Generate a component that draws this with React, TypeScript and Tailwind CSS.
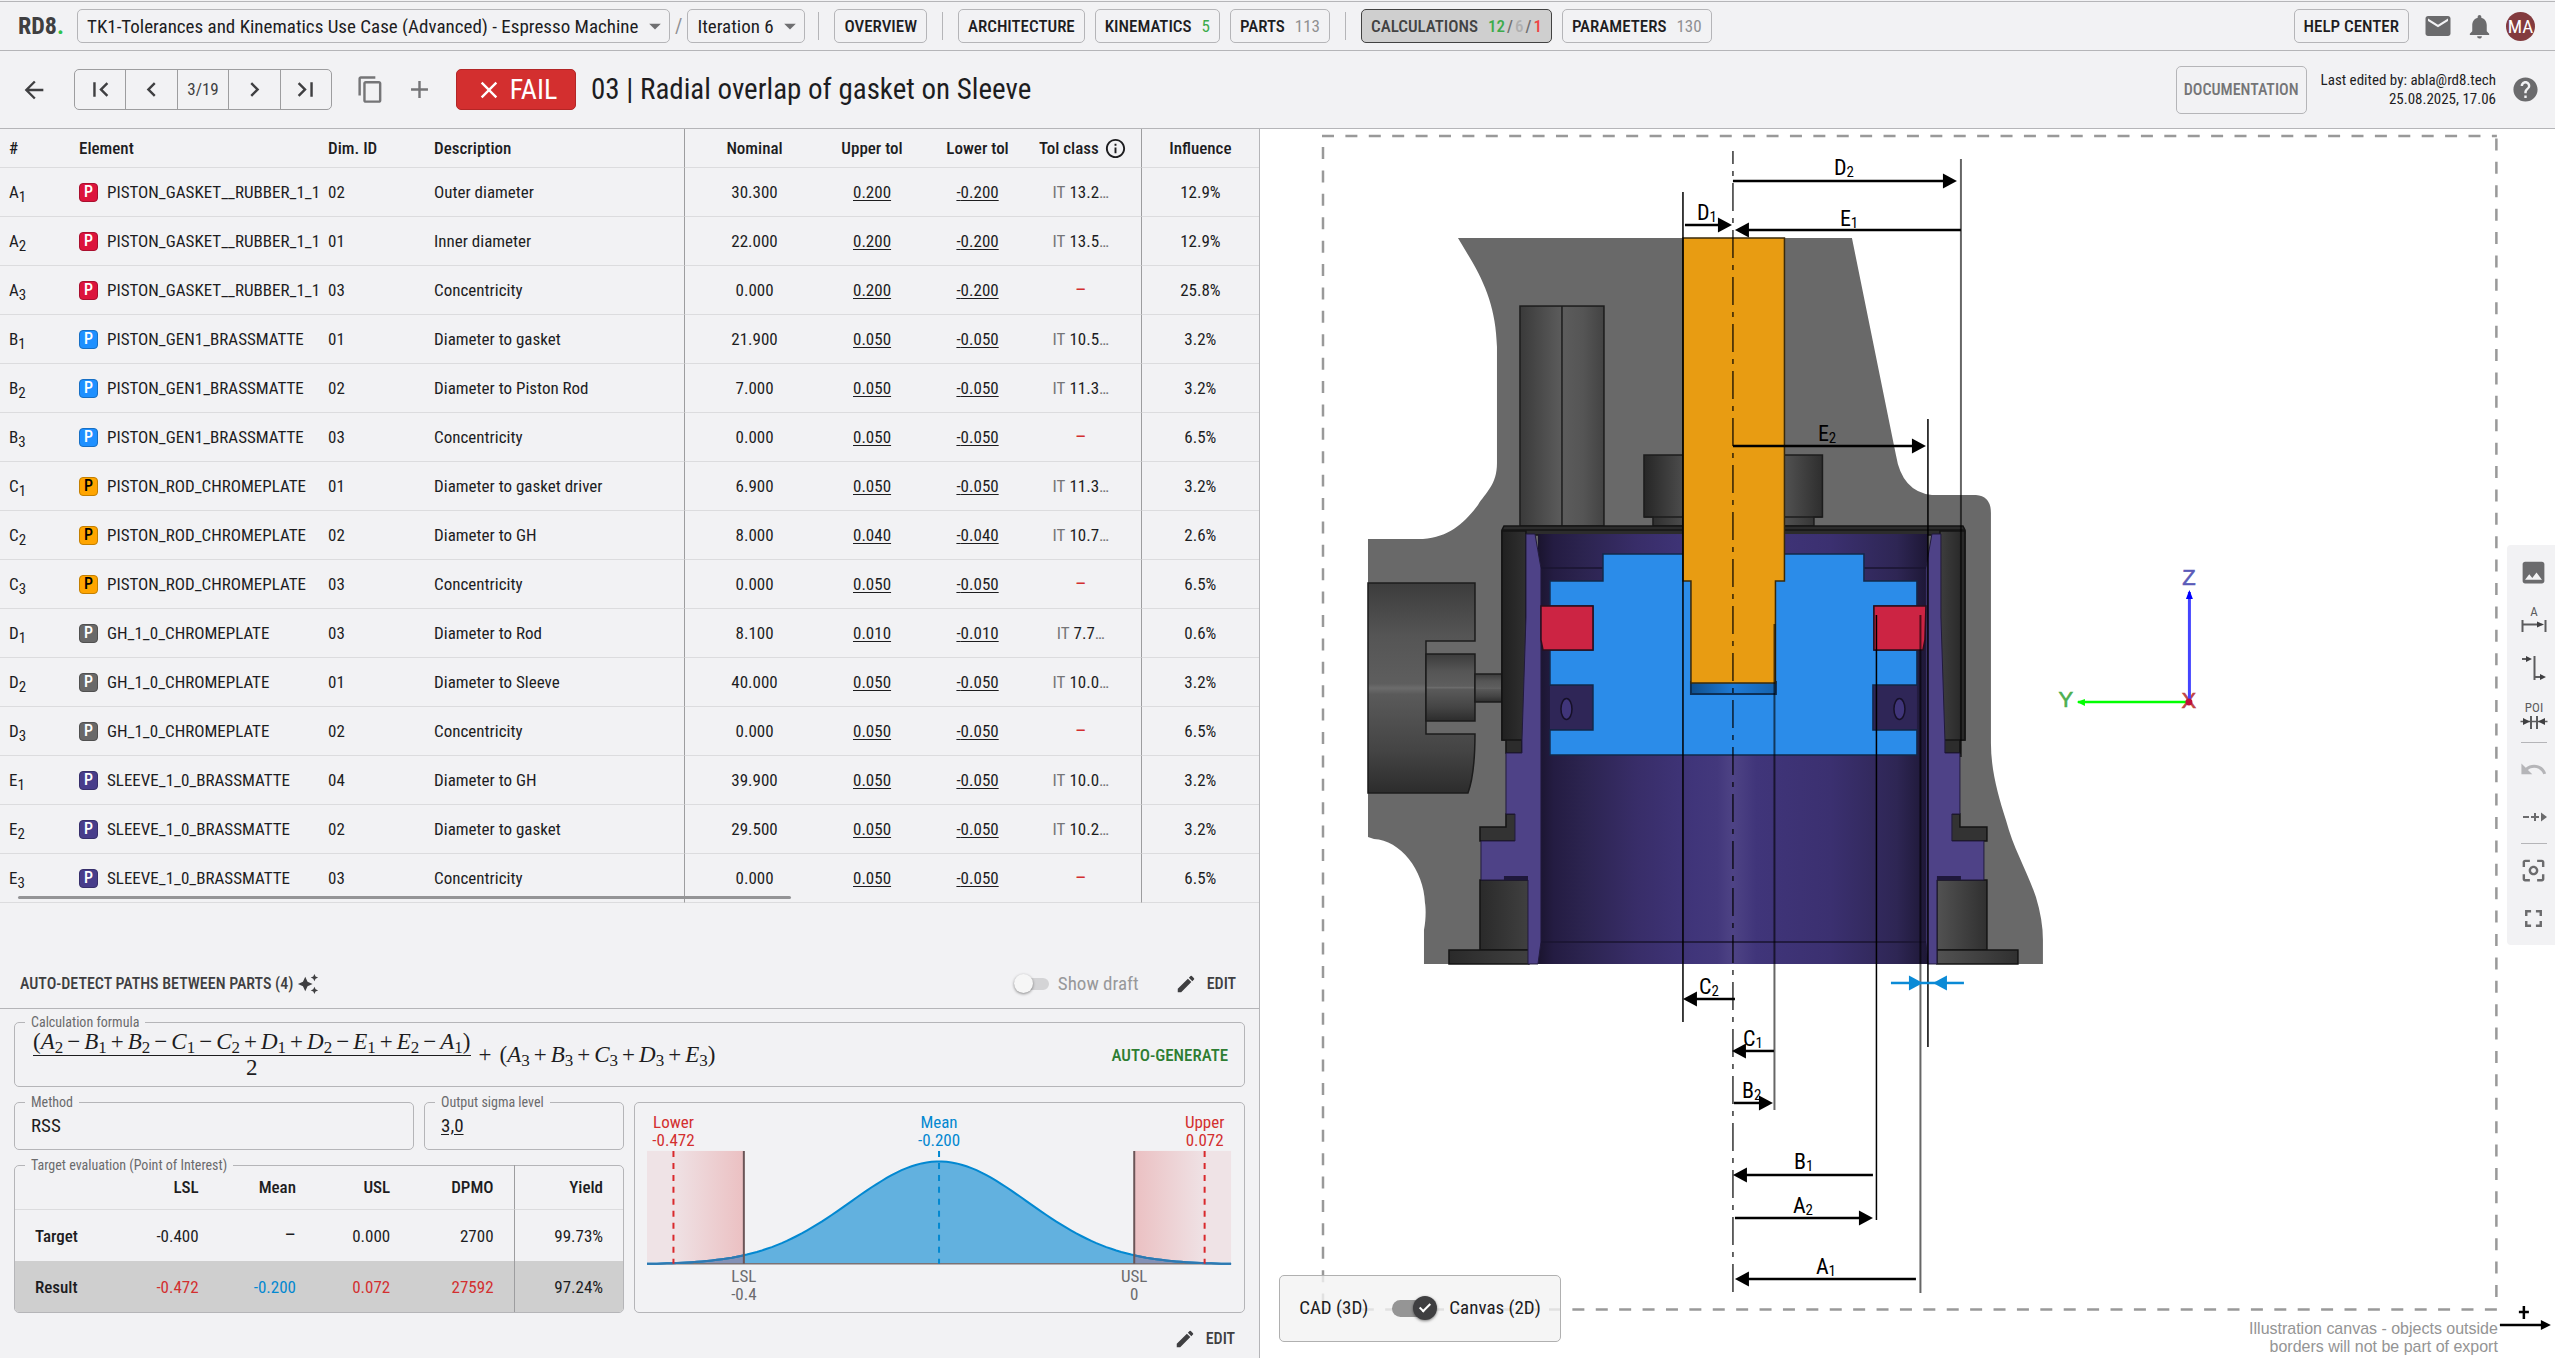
import type { ReactNode } from "react";
import {
  MdAdd,
  MdArrowBack,
  MdArrowDropDown,
  MdAutoAwesome,
  MdCenterFocusWeak,
  MdChevronLeft,
  MdChevronRight,
  MdClose,
  MdContentCopy,
  MdEdit,
  MdEmail,
  MdFirstPage,
  MdFullscreen,
  MdHelp,
  MdImage,
  MdInfoOutline,
  MdLastPage,
  MdNotifications,
  MdUndo,
} from "react-icons/md";

/* ---------- shared data ---------- */

type PartKey = "gasket" | "piston" | "rod" | "gh" | "sleeve";

const PARTS: Record<PartKey, { name: string; badge: string }> = {
  gasket: { name: "PISTON_GASKET__RUBBER_1_1", badge: "bg-[#dc143c] border-[#a90f2e] text-white" },
  piston: { name: "PISTON_GEN1_BRASSMATTE", badge: "bg-[#1e90ff] border-[#176fc4] text-white" },
  rod: { name: "PISTON_ROD_CHROMEPLATE", badge: "bg-[#ffa500] border-[#c47f00] text-black" },
  gh: { name: "GH_1_0_CHROMEPLATE", badge: "bg-[#696969] border-[#505050] text-white" },
  sleeve: { name: "SLEEVE_1_0_BRASSMATTE", badge: "bg-[#483d8b] border-[#372f6b] text-white" },
};

type Row = [string, string, PartKey, string, string, string, string, string | null, string];

const ROWS: Row[] = [
  ["A", "1", "gasket", "02", "Outer diameter", "30.300", "0.200", "13.2", "12.9%"],
  ["A", "2", "gasket", "01", "Inner diameter", "22.000", "0.200", "13.5", "12.9%"],
  ["A", "3", "gasket", "03", "Concentricity", "0.000", "0.200", null, "25.8%"],
  ["B", "1", "piston", "01", "Diameter to gasket", "21.900", "0.050", "10.5", "3.2%"],
  ["B", "2", "piston", "02", "Diameter to Piston Rod", "7.000", "0.050", "11.3", "3.2%"],
  ["B", "3", "piston", "03", "Concentricity", "0.000", "0.050", null, "6.5%"],
  ["C", "1", "rod", "01", "Diameter to gasket driver", "6.900", "0.050", "11.3", "3.2%"],
  ["C", "2", "rod", "02", "Diameter to GH", "8.000", "0.040", "10.7", "2.6%"],
  ["C", "3", "rod", "03", "Concentricity", "0.000", "0.050", null, "6.5%"],
  ["D", "1", "gh", "03", "Diameter to Rod", "8.100", "0.010", "7.7", "0.6%"],
  ["D", "2", "gh", "01", "Diameter to Sleeve", "40.000", "0.050", "10.0", "3.2%"],
  ["D", "3", "gh", "02", "Concentricity", "0.000", "0.050", null, "6.5%"],
  ["E", "1", "sleeve", "04", "Diameter to GH", "39.900", "0.050", "10.0", "3.2%"],
  ["E", "2", "sleeve", "02", "Diameter to gasket", "29.500", "0.050", "10.2", "3.2%"],
  ["E", "3", "sleeve", "03", "Concentricity", "0.000", "0.050", null, "6.5%"],
];

/* ---------- top bars ---------- */

function Divider() {
  return <span className="mx-[5px] h-7 w-px bg-[#b5b5b8]" />;
}

function NavButton({ children, active = false }: { children: ReactNode; active?: boolean }) {
  return (
    <button
      type="button"
      className={
        active
          ? "flex h-[34px] items-center gap-2.5 rounded-[5px] border border-[#424242] bg-[#cfcfcf] px-[9px] font-medium text-[#424242]"
          : "flex h-[34px] items-center gap-2.5 rounded-[5px] border border-[#b5b5b8] px-[9px] font-medium text-[#1d1d1f]"
      }
    >
      {children}
    </button>
  );
}

function Picker({ label, value }: { label: string; value: string }) {
  return (
    <label className="relative flex h-[34px] items-center rounded-[5px] border border-[#b5b5b8]">
      <select
        aria-label={label}
        className="h-full appearance-none bg-transparent pr-[30px] pl-[9px] text-[19px] outline-none"
        defaultValue={value}
      >
        <option>{value}</option>
      </select>
      <MdArrowDropDown size={28} className="pointer-events-none absolute top-0.5 right-0 text-[#6f6f71]" />
    </label>
  );
}

function TopBar() {
  return (
    <header className="mt-px flex h-[50px] items-center border-y border-[#b5b5b8] pr-5 text-[17px] leading-none">
      <a href="#home" className="w-[77px] pl-[18px] text-[24px] font-bold text-[#3f3f41]">
        RD8<span className="text-[#2fc24c]">.</span>
      </a>
      <Picker label="Project" value="TK1-Tolerances and Kinematics Use Case (Advanced) - Espresso Machine" />
      <span className="px-[5px] text-[20px] text-[#8f8f91]">/</span>
      <Picker label="Iteration" value="Iteration 6" />
      <nav className="ml-2 flex items-center gap-2.5">
        <Divider />
        <NavButton>OVERVIEW</NavButton>
        <Divider />
        <NavButton>ARCHITECTURE</NavButton>
        <NavButton>
          KINEMATICS <span className="font-normal text-[#3cab4b]">5</span>
        </NavButton>
        <NavButton>
          PARTS <span className="font-normal text-[#8f8f91]">113</span>
        </NavButton>
        <Divider />
        <NavButton active>
          CALCULATIONS
          <span className="flex gap-[2px] text-[#6f6f71]">
            <span className="text-[#3cab4b]">12</span>/<span className="text-[#b0b0b0]">6</span>/
            <span className="text-[#ef4444]">1</span>
          </span>
        </NavButton>
        <NavButton>
          PARAMETERS <span className="font-normal text-[#8f8f91]">130</span>
        </NavButton>
      </nav>
      <div className="ml-auto flex items-center text-[#6b6b6d]">
        <NavButton>HELP CENTER</NavButton>
        <button type="button" aria-label="Messages" className="ml-[14px]">
          <MdEmail size={30} />
        </button>
        <button type="button" aria-label="Notifications" className="ml-3">
          <MdNotifications size={29} />
        </button>
        <button
          type="button"
          aria-label="Account"
          className="ml-3 flex size-[29px] items-center justify-center rounded-full bg-[#833b3e] text-[19px] text-white"
        >
          MA
        </button>
      </div>
    </header>
  );
}

function PagerButton({ label, children }: { label: string; children: ReactNode }) {
  return (
    <button type="button" aria-label={label} className="flex flex-1 items-center justify-center">
      {children}
    </button>
  );
}

function TitleBar() {
  return (
    <div className="flex h-[78px] items-center border-b border-[#b5b5b8] pr-[15px] text-[#3f3f41]">
      <button type="button" aria-label="Back" className="ml-5">
        <MdArrowBack size={28} />
      </button>
      <div className="ml-[26px] flex h-[41px] w-[258px] divide-x divide-[#9d9d9f] rounded-[5px] border border-[#9d9d9f] text-[17px]">
        <PagerButton label="First">
          <MdFirstPage size={29} />
        </PagerButton>
        <PagerButton label="Previous">
          <MdChevronLeft size={29} />
        </PagerButton>
        <span className="flex flex-1 items-center justify-center">3/19</span>
        <PagerButton label="Next">
          <MdChevronRight size={29} />
        </PagerButton>
        <PagerButton label="Last">
          <MdLastPage size={29} />
        </PagerButton>
      </div>
      <button type="button" aria-label="Duplicate" className="ml-6 text-[#757577]">
        <MdContentCopy size={29} />
      </button>
      <button type="button" aria-label="Add" className="ml-5 text-[#757577]">
        <MdAdd size={29} />
      </button>
      <span className="ml-[22px] flex h-[41px] w-[120px] items-center justify-center gap-[7px] rounded-[5px] border border-[#b32626] bg-[#d32f2f] text-[28px] leading-none text-white">
        <MdClose size={28} />
        FAIL
      </span>
      <h1 className="ml-[15px] text-[29px] leading-none text-[#1d1d1f]">03 | Radial overlap of gasket on Sleeve</h1>
      <button
        type="button"
        className="ml-auto h-12 rounded-[5px] border border-[#b5b5b8] px-[7px] text-[16px] font-medium text-[#757577]"
      >
        DOCUMENTATION
      </button>
      <p className="ml-[14px] text-right text-[15px] leading-[19px] text-[#1d1d1f]">
        Last edited by: abla@rd8.tech
        <br />
        25.08.2025, 17.06
      </p>
      <button type="button" aria-label="Help" className="ml-[15px] text-[#6b6b6d]">
        <MdHelp size={29} />
      </button>
    </div>
  );
}

/* ---------- tolerance table ---------- */

const TH = "h-[39px] border-b border-[#dcdcde] p-0 font-medium";
const TD = "h-[49px] border-b border-[#dcdcde] p-0";
const RULE = " border-r border-r-[#9d9d9f]";

function ToleranceTable() {
  return (
    <div className="relative">
      <table className="w-full table-fixed border-separate border-spacing-0 text-[17px] leading-5">
        <colgroup>
          <col className="w-[5.56%]" />
          <col className="w-[19.78%]" />
          <col className="w-[8.42%]" />
          <col className="w-[20.65%]" />
          <col className="w-[10.72%]" />
          <col className="w-[8.26%]" />
          <col className="w-[8.5%]" />
          <col className="w-[8.78%]" />
          <col />
        </colgroup>
        <thead>
          <tr>
            <th className={TH + " pl-[9px] text-left"}>#</th>
            <th className={TH + " pl-[9px] text-left"}>Element</th>
            <th className={TH + " pl-[9px] text-left"}>Dim. ID</th>
            <th className={TH + " pl-[9px] text-left" + RULE}>Description</th>
            <th className={TH + " pl-1"}>Nominal</th>
            <th className={TH}>Upper tol</th>
            <th className={TH}>Lower tol</th>
            <th className={TH + " pr-1.5" + RULE}>
              <span className="flex items-center justify-center gap-[5px] whitespace-nowrap">
                Tol class <MdInfoOutline size={23} />
              </span>
            </th>
            <th className={TH}>Influence</th>
          </tr>
        </thead>
        <tbody>
          {ROWS.map(([letter, sub, part, dim, text, nominal, tol, it, influence]) => (
            <tr key={letter + sub}>
              <td className={TD + " pl-[9px]"}>
                {letter}
                <sub className="text-[15px]">{sub}</sub>
              </td>
              <td className={TD + " pl-[9px]"}>
                <span className="flex items-center gap-[9px]">
                  <span
                    className={
                      "flex size-[19px] shrink-0 items-center justify-center rounded-[4px] border text-[16px] leading-none font-medium " +
                      PARTS[part].badge
                    }
                  >
                    P
                  </span>
                  <span className="whitespace-nowrap">{PARTS[part].name}</span>
                </span>
              </td>
              <td className={TD + " pl-[9px]"}>{dim}</td>
              <td className={TD + " pl-[9px]" + RULE}>{text}</td>
              <td className={TD + " pl-1 text-center"}>{nominal}</td>
              <td className={TD + " text-center"}>
                <button type="button" className="underline underline-offset-2">
                  {tol}
                </button>
              </td>
              <td className={TD + " text-center"}>
                <button type="button" className="underline underline-offset-2">
                  -{tol}
                </button>
              </td>
              <td className={TD + " pr-2.5 text-center" + RULE}>
                {it ? (
                  <span className="inline-flex items-baseline">
                    <span className="mr-1 text-[#757577]">IT</span>
                    {it}
                    <span className="text-[#757577]">…</span>
                  </span>
                ) : (
                  <span className="text-[20px] text-[#d32f2f]">–</span>
                )}
              </td>
              <td className={TD + " text-center"}>{influence}</td>
            </tr>
          ))}
        </tbody>
      </table>
      <div className="absolute bottom-1 left-[18px] h-[3px] w-[61.4%] rounded-full bg-[#949496]" />
    </div>
  );
}

/* ---------- calculation section ---------- */

function Sym({ children, n }: { children: string; n: number }) {
  return (
    <span>
      <i>{children}</i>
      <sub className="text-[17px]">{n}</sub>
    </span>
  );
}

function Terms({ items }: { items: string[] }) {
  return (
    <span className="flex items-baseline gap-1 whitespace-nowrap">
      {items.map((t, i) => {
        const bare = t.replace(/[+−]/, "");
        return (
          <span key={t} className="flex items-baseline gap-1">
            {/^[+−]/.test(t) && <span>{t[0]}</span>}
            <span>
              {i === 0 && "("}
              <Sym n={Number(bare[1])}>{bare[0]}</Sym>
              {i === items.length - 1 && ")"}
            </span>
          </span>
        );
      })}
    </span>
  );
}

function EditButton() {
  return (
    <button type="button" className="flex items-center gap-[10px] text-[16px] font-medium text-[#3f3f41]">
      <MdEdit size={22} /> EDIT
    </button>
  );
}

const FIELDSET = "min-w-0 rounded-[5px] border border-[#b5b5b8] px-2.5";
const LEGEND = "px-1.5 text-[14px] leading-4 text-[#6b6b6d]";

function TargetTable() {
  const head = "h-[45px] border-b border-[#dcdcde] p-0 pr-5 text-right font-medium";
  const cell = "h-[51px] p-0 pr-5 text-right";
  const rule = " border-l border-l-[#9d9d9f]";
  return (
    <fieldset className="min-w-0 rounded-[5px] border border-[#b5b5b8]">
      <legend className={LEGEND + " ml-2.5"}>Target evaluation (Point of Interest)</legend>
      <table className="-mt-2 w-full table-fixed border-separate border-spacing-0 text-[17px] leading-5">
        <colgroup>
          <col className="w-[16.5%]" />
          <col className="w-[17%]" />
          <col className="w-[16%]" />
          <col className="w-[15.5%]" />
          <col className="w-[17%]" />
          <col />
        </colgroup>
        <thead>
          <tr>
            <td className="border-b border-[#dcdcde]" />
            <th className={head}>LSL</th>
            <th className={head}>Mean</th>
            <th className={head}>USL</th>
            <th className={head}>DPMO</th>
            <th className={head + rule}>Yield</th>
          </tr>
        </thead>
        <tbody>
          <tr>
            <th className="pl-5 text-left font-medium">Target</th>
            <td className={cell}>-0.400</td>
            <td className={cell}>
              <span className="text-[20px]">–</span>
            </td>
            <td className={cell}>0.000</td>
            <td className={cell}>2700</td>
            <td className={cell + rule}>99.73%</td>
          </tr>
          <tr className="bg-[#cfcfcf] text-[#d32f2f]">
            <th className="rounded-bl-[4px] pl-5 text-left font-medium text-[#1d1d1f]">Result</th>
            <td className={cell}>-0.472</td>
            <td className={cell + " text-[#0288d1]"}>-0.200</td>
            <td className={cell}>0.072</td>
            <td className={cell}>27592</td>
            <td className={cell + rule + " rounded-br-[4px] text-[#1d1d1f]"}>97.24%</td>
          </tr>
        </tbody>
      </table>
    </fieldset>
  );
}

/* Normal distribution around the mean, in the chart's own units. */
const CURVE = Array.from({ length: 118 }, (_, i) => {
  const x = 12 + i * 5;
  const y = 161.5 - 103 * Math.exp(-((x - 304.5) ** 2) / (2 * 88.6 ** 2));
  return `${x},${y.toFixed(1)}`;
}).join(" L");

function DistributionChart() {
  return (
    <svg viewBox="0 0 610 209" className="block w-full" role="img" aria-label="Output distribution">
      <defs>
        <linearGradient id="lowTail" x1="0" x2="1">
          <stop offset="0.25" stopColor="#efe3e6" />
          <stop offset="1" stopColor="#ebc0c2" />
        </linearGradient>
        <linearGradient id="highTail" x1="1" x2="0">
          <stop offset="0.25" stopColor="#efe3e6" />
          <stop offset="1" stopColor="#ebc0c2" />
        </linearGradient>
        <clipPath id="tails">
          <path d="M0 0H109V209H0ZM500 0H610V209H500Z" />
        </clipPath>
      </defs>
      <rect x="12" y="48" width="97" height="113" fill="url(#lowTail)" />
      <rect x="500" y="48" width="97" height="113" fill="url(#highTail)" />
      <path d={`M12,161 L${CURVE} L597,161Z`} fill="#62b1df" />
      <path d={`M12,161 L${CURVE} L597,161Z`} fill="#8391b6" clipPath="url(#tails)" />
      <path d="M12 161H597" stroke="#7b7375" strokeWidth="1.5" />
      <path d={`M${CURVE}`} fill="none" stroke="#0288d1" strokeWidth="2" />
      <path d={`M${CURVE}`} fill="none" stroke="#2f78b0" strokeWidth="2" clipPath="url(#tails)" />
      <path d="M109 48V161M500 48V161" stroke="#6b5557" strokeWidth="2" />
      <path d="M38.5 48V161M570.5 48V161" stroke="#d9292c" strokeWidth="2" strokeDasharray="6 6" />
      <path d="M304.5 48V161" stroke="#0288d1" strokeWidth="2" strokeDasharray="6 6" />
      <g className="text-[17px]" textAnchor="middle">
        <g fill="#d32f2f">
          <text x="38.5" y="25">Lower</text>
          <text x="38.5" y="43">-0.472</text>
          <text x="570.5" y="25">Upper</text>
          <text x="570.5" y="43">0.072</text>
        </g>
        <g fill="#0288d1">
          <text x="304.5" y="25">Mean</text>
          <text x="304.5" y="43">-0.200</text>
        </g>
        <g fill="#6b6b6d">
          <text x="109" y="179">LSL</text>
          <text x="109" y="197">-0.4</text>
          <text x="500" y="179">USL</text>
          <text x="500" y="197">0</text>
        </g>
      </g>
    </svg>
  );
}

function LeftPanel() {
  return (
    <section className="flex w-[49.32%] shrink-0 flex-col border-r border-[#b5b5b8]">
      <ToleranceTable />
      <div className="mt-auto flex h-[49px] items-center border-b border-[#b5b5b8] pr-[23px] pl-5">
        <button type="button" className="flex items-center gap-1 text-[16px] font-medium text-[#3f3f41]">
          AUTO-DETECT PATHS BETWEEN PARTS (4) <MdAutoAwesome size={22} />
        </button>
        <label className="mr-9 ml-auto flex items-center gap-2 text-[19px] text-[#98989a]">
          <input
            type="checkbox"
            className="relative mr-px h-3 w-[35px] appearance-none rounded-full bg-[#d4d4d6] before:absolute before:-top-1 before:left-0 before:size-[19px] before:rounded-full before:bg-[#f6f6f6] before:shadow-[0_1px_3px_rgba(0,0,0,0.45)]"
          />
          Show draft
        </label>
        <EditButton />
      </div>
      <div className="flex flex-col gap-[7px] px-[14px] pt-[5px]">
        <fieldset className={FIELDSET + " h-[73px]"}>
          <legend className={LEGEND}>Calculation formula</legend>
          <div className="flex items-center justify-between pr-1.5 pl-2 font-['Liberation_Serif',serif] text-[23px] leading-6">
            <div className="flex items-center gap-2">
              <span className="flex flex-col items-center">
                <span className="h-[26px] border-b border-[#1d1d1f]">
                  <Terms items={["A2", "−B1", "+B2", "−C1", "−C2", "+D1", "+D2", "−E1", "+E2", "−A1"]} />
                </span>
                <span>2</span>
              </span>
              <span>+</span>
              <Terms items={["A3", "+B3", "+C3", "+D3", "+E3"]} />
            </div>
            <button
              type="button"
              className="font-['Roboto_Condensed',Roboto,sans-serif] text-[17px] font-medium text-[#2e7d32]"
            >
              AUTO-GENERATE
            </button>
          </div>
        </fieldset>
        <div className="grid grid-cols-[610fr_611fr] gap-2.5">
          <div className="flex flex-col gap-[7px]">
            <div className="grid grid-cols-[2fr_1fr] gap-2.5">
              <fieldset className={FIELDSET + " h-14"}>
                <legend className={LEGEND}>Method</legend>
                <p className="pt-1 pl-1.5 text-[19px] leading-6">RSS</p>
              </fieldset>
              <fieldset className={FIELDSET + " h-14"}>
                <legend className={LEGEND}>Output sigma level</legend>
                <input
                  aria-label="Output sigma level"
                  defaultValue="3,0"
                  className="block w-full bg-transparent pt-1 pl-1.5 text-[19px] leading-6 underline underline-offset-2 outline-none"
                />
              </fieldset>
            </div>
            <TargetTable />
          </div>
          <div className="mt-2 rounded-[5px] border border-[#b5b5b8]">
            <DistributionChart />
          </div>
        </div>
        <div className="flex h-[38px] items-center justify-end pr-2.5">
          <EditButton />
        </div>
      </div>
    </section>
  );
}

/* ---------- section drawing ---------- */

function Arrow({ from, to, y, color = "#000" }: { from: number; to: number; y: number; color?: string }) {
  const d = to > from ? 1 : -1;
  return (
    <g fill={color} stroke={color}>
      <path d={`M${from} ${y}H${to - d * 12}`} strokeWidth="2.5" />
      <path d={`M${to} ${y}L${to - d * 14} ${y - 7.5}V${y + 7.5}Z`} stroke="none" />
    </g>
  );
}

function Mark({ x, y, t, n }: { x: number; y: number; t: string; n: number }) {
  return (
    <text x={x} y={y} className="text-[22px]">
      {t}
      <tspan dy="2" className="text-[15px]">
        {n}
      </tspan>
    </text>
  );
}

function SectionDrawing() {
  return (
    <svg viewBox="1260 129 1295 1229" className="block h-full w-full" role="img" aria-label="Section view">
      <defs>
        <linearGradient id="bore" x1="0" x2="1">
          <stop offset="0" stopColor="#1a142e" />
          <stop offset="0.04" stopColor="#241c42" />
          <stop offset="0.12" stopColor="#2c2450" />
          <stop offset="0.25" stopColor="#382d68" />
          <stop offset="0.4" stopColor="#40357a" />
          <stop offset="0.46" stopColor="#43387c" />
          <stop offset="0.5" stopColor="#4e4385" />
          <stop offset="0.56" stopColor="#40357a" />
          <stop offset="0.75" stopColor="#3b3070" />
          <stop offset="0.92" stopColor="#2e2654" />
          <stop offset="1" stopColor="#1d1735" />
        </linearGradient>
        <linearGradient id="slot" x1="0" x2="1">
          <stop offset="0" stopColor="#3a3a3a" />
          <stop offset="0.35" stopColor="#525252" />
          <stop offset="0.5" stopColor="#5c5c5c" />
          <stop offset="0.75" stopColor="#555" />
          <stop offset="1" stopColor="#434343" />
        </linearGradient>
        <linearGradient id="boltL" x1="0" x2="1">
          <stop offset="0" stopColor="#262626" />
          <stop offset="1" stopColor="#4c4c4c" />
        </linearGradient>
        <linearGradient id="boltR" x1="1" x2="0">
          <stop offset="0" stopColor="#2e2e2e" />
          <stop offset="1" stopColor="#525252" />
        </linearGradient>
        <linearGradient id="wallL" x1="0" x2="1">
          <stop offset="0" stopColor="#202020" />
          <stop offset="1" stopColor="#303030" />
        </linearGradient>
        <linearGradient id="wallR" x1="0" x2="1">
          <stop offset="0" stopColor="#3e3e3e" />
          <stop offset="1" stopColor="#262626" />
        </linearGradient>
        <linearGradient id="pocketL" x1="0" x2="1">
          <stop offset="0" stopColor="#2a2a2a" />
          <stop offset="1" stopColor="#404040" />
        </linearGradient>
        <linearGradient id="pocketR" x1="0" x2="1">
          <stop offset="0" stopColor="#525252" />
          <stop offset="1" stopColor="#303030" />
        </linearGradient>
        <linearGradient id="shaft" x1="0" x2="0" y1="0" y2="1">
          <stop offset="0" stopColor="#3c3c3c" />
          <stop offset="0.25" stopColor="#555" />
          <stop offset="0.48" stopColor="#5e5e5e" />
          <stop offset="0.5" stopColor="#6c6c6c" />
          <stop offset="0.53" stopColor="#5a5a5a" />
          <stop offset="0.8" stopColor="#444" />
          <stop offset="1" stopColor="#2c2c2c" />
        </linearGradient>
        <linearGradient id="hole" x1="0" x2="1">
          <stop offset="0" stopColor="#0f4f8d" />
          <stop offset="0.5" stopColor="#1d7ad6" />
          <stop offset="1" stopColor="#1562ad" />
        </linearGradient>
      </defs>

      {/* gear housing */}
      <path
        fill="#696969"
        d="M1458 238H1852L1896 455Q1902 492 1932 495H1976Q1991 496 1991 513V743C1991 770 1998 795 2006 820C2014 850 2026 868 2036 897Q2043 920 2043 940V964H1424V930C1426 920 1426 908 1425 903C1424 870 1400 840 1374 839L1368 837V539H1423C1450 537 1465 522 1478 505C1486 492 1497 485 1497 463V347C1496 310 1486 285 1470 258Z"
      />
      <g stroke="#1c1c1c" strokeWidth="1.5">
        <rect x="1520" y="306" width="84" height="220" fill="url(#slot)" />
        <path d="M1562 306V526" />
        <path d="M1644 455H1683V526H1653V517H1644Z" fill="url(#boltL)" />
        <path d="M1784 455H1822.5V517H1814V526H1784Z" fill="url(#boltR)" />
        <path d="M1644 517H1683M1784 517H1822.5" />
        <path d="M1368 583H1475V641H1426V734H1475C1475 765 1472 782 1468 793H1368Z" fill="url(#shaft)" />
        <rect x="1426" y="654" width="49" height="67" fill="url(#shaft)" />
        <rect x="1475" y="674" width="27" height="28" fill="url(#shaft)" />
      </g>

      {/* cavities around the sleeve */}
      <g stroke="#141414" strokeWidth="1.5">
        <path d="M1504 526H1963L1965 530V740H1960V753H1944V740H1940V535H1526V740H1522V753H1506V740H1502V530Z" fill="#2c2c2c" />
        <path d="M1502 531H1526V740H1502Z" fill="url(#wallL)" />
        <path d="M1940 531H1965V740H1940Z" fill="url(#wallR)" />
        <path d="M1502 530H1965" />
        <path d="M1506 814H1516V841H1480V827H1506ZM1951 814H1960V827H1987V841H1951Z" fill="#333" />
        <path d="M1480 880H1529V950H1480Z" fill="url(#pocketL)" />
        <path d="M1937 880H1987V950H1937Z" fill="url(#pocketR)" />
        <path d="M1449 950H1529V964H1449Z" fill="url(#pocketL)" />
        <path d="M1937 950H2018V964H1937Z" fill="url(#pocketR)" />
      </g>

      {/* sleeve */}
      <rect x="1538" y="534" width="390" height="430" fill="url(#bore)" />
      <g fill="#4e4287" stroke="#211a3c" strokeWidth="1">
        <path d="M1526 534H1535L1541 568V942L1538 964H1528V880H1481V841H1515V814H1506V753H1522V740L1526 617Z" />
        <path d="M1941 534H1932L1926 568V942L1928 964H1937V880H1984V841H1952V814H1960V753H1945V740L1941 617Z" />
      </g>
      <path d="M1504 876H1528V880H1504ZM1937 876H1961V880H1937Z" fill="#1f183c" />
      <path d="M1541 568H1926M1541 942H1926" stroke="#1a1430" strokeWidth="1.5" />

      {/* piston, gasket and rod */}
      <path
        d="M1603 554H1864V581H1917V606H1874V650H1917V685H1873V730H1917V755H1550V730H1593V685H1550V650H1593V606H1550V581H1603Z"
        fill="#2b8ce9"
        stroke="#12284a"
        strokeWidth="1.5"
      />
      <path d="M1541 606H1593V650H1543L1541 640ZM1926 606H1874V650H1923L1925 640Z" fill="#cc2443" stroke="#2a0f1d" strokeWidth="1.5" />
      <path d="M1550 686H1592V729H1550ZM1917 686H1874V729H1917Z" fill="#2f2657" />
      <g fill="#40357a" stroke="#161028" strokeWidth="1.5">
        <ellipse cx="1566.5" cy="709" rx="5.5" ry="10.5" />
        <ellipse cx="1899.5" cy="709" rx="5.5" ry="10.5" />
      </g>
      <rect x="1691" y="682" width="85" height="12" fill="url(#hole)" stroke="#0d2f55" strokeWidth="2" />
      <path d="M1683 238H1784.5V581H1775.5V683H1691V581H1683Z" fill="#e89c12" stroke="#3a2a0a" strokeWidth="1.5" />

      {/* axis and extension lines */}
      <path d="M1733 1292V151" stroke="#000" strokeWidth="1.2" strokeDasharray="28 7 5 7" />
      <path d="M1683 192V1022M1928 419V1047M1876.5 615V1220" stroke="#000" strokeWidth="1.5" />
      <path d="M1961 159V757M1774.5 624V1110M1920.5 615V1293" stroke="#000" strokeOpacity="0.6" strokeWidth="2" />

      <Arrow from={1733} to={1957} y={181} />
      <Arrow from={1685} to={1732} y={225} />
      <Arrow from={1961} to={1735} y={230} />
      <Arrow from={1733} to={1926} y={446} />
      <Arrow from={1735} to={1683} y={999} />
      <Arrow from={1774} to={1732} y={1051} />
      <Arrow from={1734} to={1773} y={1103} />
      <Arrow from={1873} to={1733} y={1175} />
      <Arrow from={1735} to={1873} y={1218} />
      <Arrow from={1916} to={1735} y={1279} />
      <Arrow from={1891} to={1923} y={983} color="#0a8ad6" />
      <Arrow from={1964} to={1933} y={983} color="#0a8ad6" />
      <path d="M1920 983H1936" stroke="#0a8ad6" strokeWidth="2.5" />

      <Mark x={1834} y={175} t="D" n={2} />
      <Mark x={1697} y={220} t="D" n={1} />
      <Mark x={1840} y={226} t="E" n={1} />
      <Mark x={1818} y={441} t="E" n={2} />
      <Mark x={1699} y={994} t="C" n={2} />
      <Mark x={1743} y={1046} t="C" n={1} />
      <Mark x={1742} y={1098} t="B" n={2} />
      <Mark x={1794} y={1169} t="B" n={1} />
      <Mark x={1793} y={1213} t="A" n={2} />
      <Mark x={1816} y={1274} t="A" n={1} />

      {/* export frame */}
      <g stroke="#999" strokeWidth="2.5" fill="none">
        <path d="M1322 136H2497" strokeDasharray="12 11.4" />
        <path d="M1323 147V1310" strokeDasharray="12 11.4" />
        <path d="M2496.5 1297V136" strokeDasharray="12 11.4" />
        <path d="M2497 1309.5H1322" strokeDasharray="12 11.4" />
      </g>
      <g className="font-['Liberation_Sans',Arial,sans-serif] text-[16px]" fill="#949494" textAnchor="end">
        <text x="2498" y="1334">Illustration canvas - objects outside</text>
        <text x="2498" y="1352">borders will not be part of export</text>
      </g>
      <path d="M2500 1325H2542M2524 1306V1319M2519 1312H2529" stroke="#000" strokeWidth="2.5" />
      <path d="M2551 1325L2541 1320V1330Z" />

      {/* axis triad */}
      <g className="font-['Liberation_Sans',Arial,sans-serif] text-[22px]" strokeWidth="0.6" textAnchor="middle">
        <text x="2189" y="585" fill="#5a5ab8" stroke="#5a5ab8">Z</text>
        <text x="2066" y="707" fill="#4caf50" stroke="#4caf50">Y</text>
        <text x="2189" y="708" fill="#c04444" stroke="#c04444">X</text>
      </g>
      <path d="M2189 702H2078" stroke="#00ff00" strokeWidth="2.5" />
      <path d="M2077 702L2085 699V706Z" fill="#00ff00" />
      <path d="M2189.5 702V592" stroke="#4444ff" strokeWidth="3" />
      <path d="M2189.5 590L2186 599H2193Z" fill="#0000ff" />
      <circle cx="2189" cy="702" r="3.5" fill="#c0103a" />
    </svg>
  );
}

/* ---------- canvas tools ---------- */

function ToolButton({ label, children }: { label: string; children: ReactNode }) {
  return (
    <button type="button" aria-label={label} className="flex h-12 w-full items-center justify-center">
      {children}
    </button>
  );
}

function DimensionIcon() {
  return (
    <svg width="28" height="28" viewBox="0 0 28 28" fill="#5c5c5e" stroke="#5c5c5e">
      <path d="M2.5 14V26M25.5 14V26M3 18.5H19" strokeWidth="2" fill="none" />
      <path d="M24 18.5L17 15.5V21.5Z" fill="#3f3f41" stroke="none" />
      <text x="14" y="10" textAnchor="middle" stroke="none" className="text-[13px]">A</text>
    </svg>
  );
}

function StepIcon() {
  return (
    <svg width="28" height="28" viewBox="0 0 28 28" stroke="#5c5c5e">
      <path d="M14.5 2V26M2 5H9M14 23H21" strokeWidth="2" fill="none" />
      <path d="M12 5L6 2V8ZM26 23L20 20V26Z" fill="#3f3f41" stroke="none" />
    </svg>
  );
}

function PoiIcon() {
  return (
    <svg width="28" height="30" viewBox="0 0 28 30" fill="#5c5c5e" stroke="#5c5c5e">
      <text x="14" y="11" textAnchor="middle" stroke="none" className="text-[13px]">POI</text>
      <path d="M11 15V28M17 15V28" strokeWidth="2" />
      <path d="M0.5 20.5H27.5" strokeWidth="1.5" />
      <path d="M10 20.5L3 17V24ZM18 20.5L25 17V24Z" fill="#3f3f41" stroke="none" />
    </svg>
  );
}

function DirectionIcon() {
  return (
    <svg width="26" height="14" viewBox="0 0 26 14" stroke="#6b6b6d" strokeWidth="2">
      <path d="M2 7H8M10 7H18M14 3V11" fill="none" />
      <path d="M20 2.5L26 7L20 11.5Z" fill="#6b6b6d" stroke="none" />
    </svg>
  );
}

function CanvasPanel() {
  return (
    <section className="relative min-w-0 flex-1 bg-white">
      <SectionDrawing />
      <div className="absolute top-[416px] right-0 flex w-12 flex-col items-center rounded-l-[4px] bg-[#f2f2f4] py-[3px] pl-[5px] text-[#6b6b6d]">
        <ToolButton label="Background image">
          <MdImage size={29} />
        </ToolButton>
        <ToolButton label="Dimension">
          <DimensionIcon />
        </ToolButton>
        <ToolButton label="Step line">
          <StepIcon />
        </ToolButton>
        <ToolButton label="Point of interest">
          <PoiIcon />
        </ToolButton>
        <span className="my-0.5 h-px w-[26px] bg-[#b5b5b8]" />
        <ToolButton label="Undo">
          <MdUndo size={29} className="text-[#b5b5b8]" />
        </ToolButton>
        <ToolButton label="Direction">
          <DirectionIcon />
        </ToolButton>
        <span className="my-0.5 h-px w-[26px] bg-[#b5b5b8]" />
        <ToolButton label="Centre view">
          <MdCenterFocusWeak size={29} />
        </ToolButton>
        <ToolButton label="Fullscreen">
          <MdFullscreen size={29} />
        </ToolButton>
      </div>
      <label className="absolute bottom-4 left-[19px] flex h-[67px] items-center rounded-[5px] border border-[#b0b0b0] bg-[#f3f3f3]/80 px-[19px] text-[19px]">
        CAD (3D)
        <input
          type="checkbox"
          defaultChecked
          className="relative mr-4 ml-6 h-[17px] w-[41px] appearance-none rounded-full bg-[#959595] before:absolute before:-top-1 before:-right-1 before:size-6 before:rounded-full before:bg-[#3f3f41] before:shadow-[0_1px_3px_rgba(0,0,0,0.5)] after:absolute after:top-px after:right-[5px] after:h-[11px] after:w-[6px] after:rotate-45 after:border-r-2 after:border-b-2 after:border-white"
        />
        Canvas (2D)
      </label>
    </section>
  );
}

export default function App() {
  return (
    <div className="flex h-screen min-h-[1358px] flex-col bg-[#f2f2f4] font-['Roboto_Condensed',Roboto,sans-serif] text-[#1d1d1f]">
      <TopBar />
      <TitleBar />
      <main className="flex min-h-0 flex-1">
        <LeftPanel />
        <CanvasPanel />
      </main>
    </div>
  );
}
